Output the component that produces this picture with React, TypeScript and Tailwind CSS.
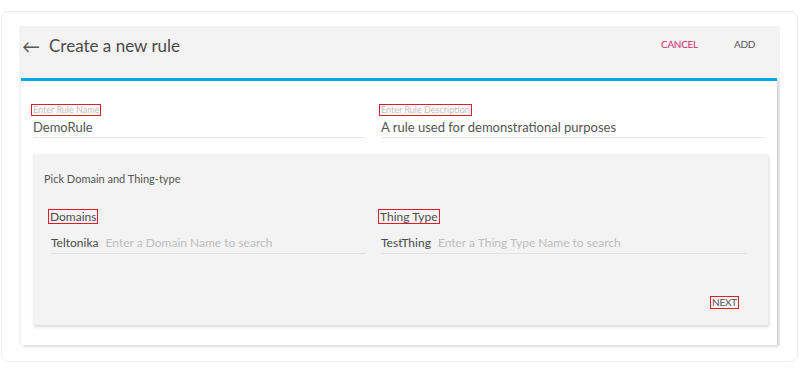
import React from "react"

const font = { fontFamily: "Lato, 'Noto Sans', sans-serif" }

function Tag({ children, className = "" }: { children: React.ReactNode; className?: string }) {
  return (
    <div className="flex">
      <span className={"block border border-[#e5192a] px-[1px] " + className}>{children}</span>
    </div>
  )
}

export default function App() {
  return (
    <div className="w-[800px] h-[374px] bg-white pt-[11px] pl-[1px] text-[#4f4f4f]" style={font}>
      <div className="w-[797px] h-[351px] border border-[#ececec] rounded-[7px] pl-[17px] pt-[14px]">
        <div className="w-[761px] bg-[#f3f3f3]">
          {/* header */}
          <div className="h-[40px] flex items-center">
            <span className="ml-[3px] text-[18px] text-[#555] leading-none">←</span>
            <h1 className="ml-[9px] text-[17px] text-[#4a4a4a]">Create a new rule</h1>
            <div className="ml-auto self-start pt-[11px] flex gap-[36px] pr-[25px] text-[10px] tracking-[-0.3px]">
              <button className="text-[#d6286f]">CANCEL</button>
              <button className="text-[#555]">ADD</button>
            </div>
          </div>
          <div className="h-[12px]" />
          {/* card */}
          <div className="ml-[2px] w-[756px] h-[267px] bg-white border-t-[3px] border-[#00aae6] shadow-[2px_2px_2px_rgba(0,0,0,0.12)] px-[12px] pt-[23px]">
            <div className="flex gap-[15px]">
              <div className="w-[333px]">
                <Tag className="-ml-[2px] text-[9px] leading-[10px] text-[#bdbdbd]">Enter Rule Name</Tag>
                <div className="mt-[3px] pb-[2px] text-[13px] leading-[16px] text-[#555] border-b border-[#e6e6e6]">DemoRule</div>
              </div>
              <div className="w-[384px]">
                <Tag className="-ml-[2px] text-[9px] leading-[10px] text-[#bdbdbd]">Enter Rule Description</Tag>
                <div className="mt-[3px] pb-[2px] text-[13px] leading-[16px] text-[#555] border-b border-[#e6e6e6]">A rule used for demonstrational purposes</div>
              </div>
            </div>
            {/* inner panel */}
            <div className="mt-[16px] w-[735px] h-[171px] bg-[#f3f3f3] shadow-[1px_2px_3px_rgba(0,0,0,0.15)] pl-[11px] pt-[18px]">
              <div className="text-[11px] leading-[14px] text-[#555]">Pick Domain and Thing-type</div>
              <div className="mt-[23px] flex gap-[15px] pl-[4px]">
                <div className="w-[318px]">
                  <Tag className="text-[12px] leading-[13px] text-[#4f4f4f]">Domains</Tag>
                  <div className="mt-[11px] ml-[3px] pb-[2px] flex gap-[7px] text-[12px] leading-[16px] border-b border-[#e2e2e2]">
                    <span className="text-[#4a4a4a]">Teltonika</span>
                    <span className="text-[#bdbdbd]">Enter a Domain Name to search</span>
                  </div>
                </div>
                <div className="w-[366px]">
                  <Tag className="-ml-[3px] text-[12px] leading-[13px] text-[#4f4f4f]">Thing Type</Tag>
                  <div className="mt-[11px] pb-[2px] flex gap-[7px] text-[12px] leading-[16px] border-b border-[#e2e2e2]">
                    <span className="text-[#4a4a4a]">TestThing</span>
                    <span className="text-[#bdbdbd]">Enter a Thing Type Name to search</span>
                  </div>
                </div>
              </div>
              <div className="mt-[42px] flex justify-end pr-[29px]">
                <span className="block border border-[#e5192a] px-[1px] text-[10px] leading-[11px] tracking-[-0.2px] text-[#555]">NEXT</span>
              </div>
            </div>
          </div>
        </div>
      </div>
    </div>
  )
}
